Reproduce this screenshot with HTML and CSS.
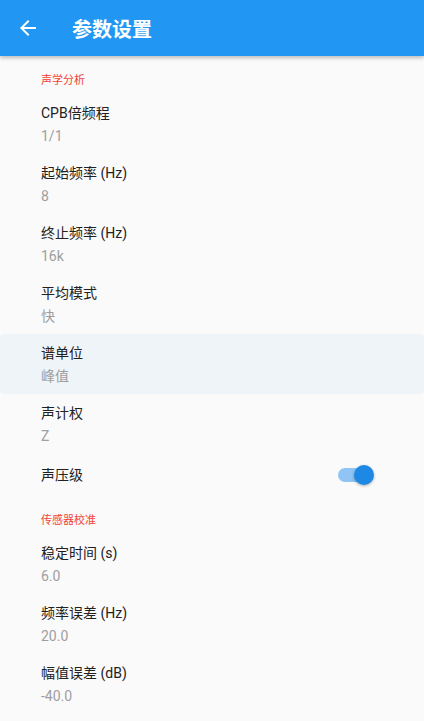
FILE: index.html
```html
<!DOCTYPE html>
<html lang="zh-CN">
<head>
    <meta charset="UTF-8">
    <meta name="viewport" content="width=device-width, initial-scale=1.0">
    <title>参数设置</title>
    <link rel="stylesheet" href="styles.css">
</head>
<body>
    <header class="app-bar">
        <button class="back-btn" aria-label="返回">
            <svg viewBox="0 0 24 24" width="24" height="24">
                <path d="M20 11H7.83l5.59-5.59L12 4l-8 8 8 8 1.41-1.41L7.83 13H20v-2z" fill="#fff"/>
            </svg>
        </button>
        <h1>参数设置</h1>
    </header>
    <main>
        <div class="section-label">声学分析</div>
        <div class="setting">
            <div class="setting-title">CPB倍频程</div>
            <div class="setting-value">1/1</div>
        </div>
        <div class="setting">
            <div class="setting-title">起始频率 (Hz)</div>
            <div class="setting-value">8</div>
        </div>
        <div class="setting">
            <div class="setting-title">终止频率 (Hz)</div>
            <div class="setting-value">16k</div>
        </div>
        <div class="setting">
            <div class="setting-title">平均模式</div>
            <div class="setting-value">快</div>
        </div>
        <div class="setting active">
            <div class="setting-title">谱单位</div>
            <div class="setting-value">峰值</div>
        </div>
        <div class="setting">
            <div class="setting-title">声计权</div>
            <div class="setting-value">Z</div>
        </div>
        <div class="setting switch-row">
            <div class="setting-title">声压级</div>
            <div class="switch on">
                <span class="track"></span>
                <span class="thumb"></span>
            </div>
        </div>

        <div class="section-label">传感器校准</div>
        <div class="setting">
            <div class="setting-title">稳定时间 (s)</div>
            <div class="setting-value">6.0</div>
        </div>
        <div class="setting">
            <div class="setting-title">频率误差 (Hz)</div>
            <div class="setting-value">20.0</div>
        </div>
        <div class="setting">
            <div class="setting-title">幅值误差 (dB)</div>
            <div class="setting-value">-40.0</div>
        </div>
    </main>
</body>
</html>
```

FILE: styles.css
```css
* {
    box-sizing: border-box;
}

body {
    margin: 0;
    background-color: #fafafa;
    font-family: Roboto, "Noto Sans CJK SC", sans-serif;
    color: #212121;
    overflow: hidden;
}

.app-bar {
    height: 56px;
    background-color: #2196f3;
    display: flex;
    align-items: center;
    padding: 0 16px;
    box-shadow: 0 2px 4px rgba(0, 0, 0, 0.25);
    position: relative;
    z-index: 1;
}

.back-btn {
    width: 24px;
    height: 24px;
    padding: 0;
    border: none;
    background: none;
    display: flex;
}

.app-bar h1 {
    margin: 0 0 0 32px;
    color: white;
    font-size: 20px;
    font-weight: 700;
    font-family: "Noto Sans CJK SC", sans-serif;
}

.section-label {
    padding: 16px 41px 8px;
    font-size: 11px;
    line-height: 14px;
    color: #f44336;
    font-family: "Noto Sans CJK SC", sans-serif;
}

.setting {
    height: 60px;
    padding: 9px 41px 8px;
    font-size: 14px;
}

.setting.active {
    background-color: #eff4f9;
    border-radius: 4px;
}

.setting-title {
    line-height: 20px;
    color: #212121;
}

.setting-value {
    margin-top: 3px;
    line-height: 20px;
    color: #9e9e9e;
}

.switch-row {
    height: 42px;
    padding-top: 11px;
    padding-right: 52px;
    display: flex;
    justify-content: space-between;
    align-items: flex-start;
}

.switch {
    position: relative;
    width: 34px;
    height: 20px;
}

.switch .track {
    position: absolute;
    left: 0;
    top: 3px;
    width: 34px;
    height: 14px;
    border-radius: 7px;
    background-color: #8fc4f4;
}

.switch .thumb {
    position: absolute;
    right: -2px;
    top: 0;
    width: 20px;
    height: 20px;
    border-radius: 50%;
    background-color: #1e88e5;
    box-shadow: 0 1px 3px rgba(0, 0, 0, 0.3);
}
```
